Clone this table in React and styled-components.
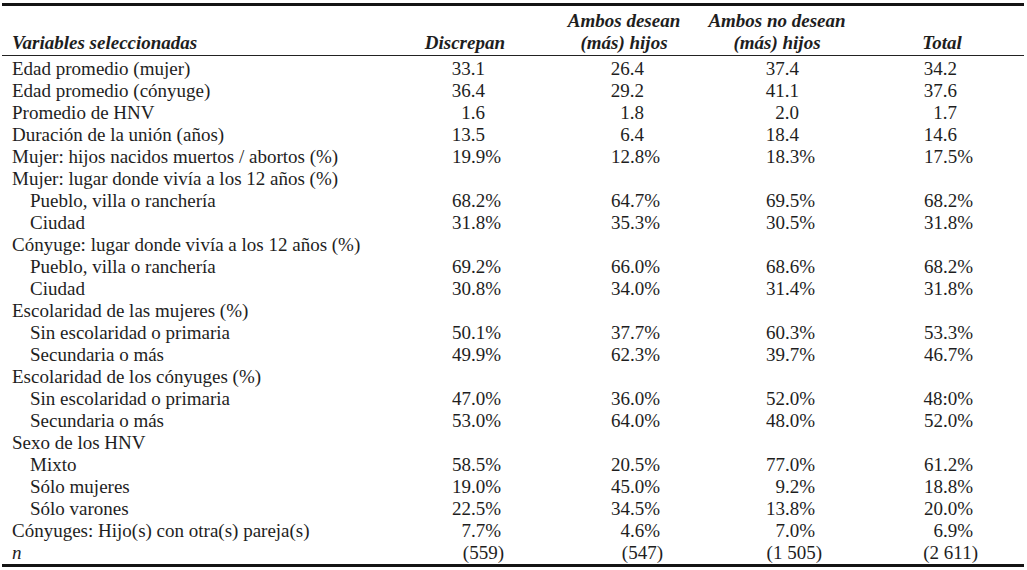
import React from 'react';
import styled, { createGlobalStyle } from 'styled-components';

const Global = createGlobalStyle`
  html, body { margin: 0; padding: 0; background: #ffffff; }
  body {
    font-family: "Liberation Serif", "Times New Roman", serif;
    color: #1e1e1e;
  }
`;

const Page = styled.div`
  width: 1027px;
  height: 570px;
  padding: 3px 3px 0 2px;
  box-sizing: border-box;
  overflow: hidden;
`;

const Table = styled.div`
  border-top: 3px solid #141414;
  border-bottom: 3px solid #141414;
  font-size: 19px;
  line-height: 22px;
`;

const Head = styled.div`
  display: grid;
  grid-template-columns: 398px 95px 43px 152px 154px 26px 124px;
  align-items: end;
  padding: 4px 0 1px 10px;
  border-bottom: 1px solid #222;
  font-weight: bold;
  font-style: italic;
`;

const HeadCell = styled.div`
  grid-column: ${(p) => p.$col};
  text-align: ${(p) => p.$align || 'center'};
  white-space: nowrap;
`;

const Body = styled.div`
  padding-top: 2px;
`;

const Row = styled.div`
  display: grid;
  grid-template-columns: 408px 85px 159px 159px 156px;
  padding-left: 10px;
  height: 22px;
`;

const Label = styled.div`
  padding-left: ${(p) => (p.$sub ? '18px' : '0')};
  font-style: ${(p) => (p.$italic ? 'italic' : 'normal')};
  white-space: nowrap;
`;

const Value = styled.div`
  text-align: right;
  white-space: nowrap;
  padding-right: ${(p) => p.$pad}px;
`;

const PCT_PAD = [4, 4, 8, 6];

const padFor = (v, i) => {
  if (v.startsWith('(')) return 1;
  if (v.endsWith('%')) return PCT_PAD[i];
  return PCT_PAD[i] + 16;
};

const rows = [
  { label: 'Edad promedio (mujer)', v: ['33.1', '26.4', '37.4', '34.2'] },
  { label: 'Edad promedio (cónyuge)', v: ['36.4', '29.2', '41.1', '37.6'] },
  { label: 'Promedio de HNV', v: ['1.6', '1.8', '2.0', '1.7'] },
  { label: 'Duración de la unión (años)', v: ['13.5', '6.4', '18.4', '14.6'] },
  { label: 'Mujer: hijos nacidos muertos / abortos (%)', v: ['19.9%', '12.8%', '18.3%', '17.5%'] },
  { label: 'Mujer: lugar donde vivía a los 12 años (%)' },
  { label: 'Pueblo, villa o ranchería', sub: true, v: ['68.2%', '64.7%', '69.5%', '68.2%'] },
  { label: 'Ciudad', sub: true, v: ['31.8%', '35.3%', '30.5%', '31.8%'] },
  { label: 'Cónyuge: lugar donde vivía a los 12 años (%)' },
  { label: 'Pueblo, villa o ranchería', sub: true, v: ['69.2%', '66.0%', '68.6%', '68.2%'] },
  { label: 'Ciudad', sub: true, v: ['30.8%', '34.0%', '31.4%', '31.8%'] },
  { label: 'Escolaridad de las mujeres (%)' },
  { label: 'Sin escolaridad o primaria', sub: true, v: ['50.1%', '37.7%', '60.3%', '53.3%'] },
  { label: 'Secundaria o más', sub: true, v: ['49.9%', '62.3%', '39.7%', '46.7%'] },
  { label: 'Escolaridad de los cónyuges (%)' },
  { label: 'Sin escolaridad o primaria', sub: true, v: ['47.0%', '36.0%', '52.0%', '48:0%'] },
  { label: 'Secundaria o más', sub: true, v: ['53.0%', '64.0%', '48.0%', '52.0%'] },
  { label: 'Sexo de los HNV' },
  { label: 'Mixto', sub: true, v: ['58.5%', '20.5%', '77.0%', '61.2%'] },
  { label: 'Sólo mujeres', sub: true, v: ['19.0%', '45.0%', '9.2%', '18.8%'] },
  { label: 'Sólo varones', sub: true, v: ['22.5%', '34.5%', '13.8%', '20.0%'] },
  { label: 'Cónyuges: Hijo(s) con otra(s) pareja(s)', v: ['7.7%', '4.6%', '7.0%', '6.9%'] },
  { label: 'n', italic: true, v: ['(559)', '(547)', '(1\u00a0505)', '(2\u00a0611)'] },
];

export default function App() {
  return (
    <>
      <Global />
      <Page>
        <Table>
          <Head>
            <HeadCell $col={1} $align="left">Variables seleccionadas</HeadCell>
            <HeadCell $col={2} $align="right">Discrepan</HeadCell>
            <HeadCell $col={4}>Ambos desean<br />(más) hijos</HeadCell>
            <HeadCell $col={5}>Ambos no desean<br />(más) hijos</HeadCell>
            <HeadCell $col={7}>Total</HeadCell>
          </Head>
          <Body>
            {rows.map((r, i) => (
              <Row key={i}>
                <Label $sub={r.sub} $italic={r.italic}>{r.label}</Label>
                {(r.v || []).map((v, j) => (
                  <Value key={j} $pad={padFor(v, j)}>{v}</Value>
                ))}
              </Row>
            ))}
          </Body>
        </Table>
      </Page>
    </>
  );
}
